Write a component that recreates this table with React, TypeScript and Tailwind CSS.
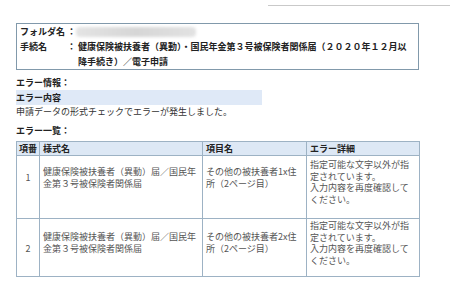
import React from "react";

const font = { fontFamily: '"Noto Sans CJK JP", "Noto Sans", sans-serif' };

type Row = {
  no: string;
  form: string[];
  item: string[];
  detail: string[];
  pad: { no: string; form: string; detail: string };
  h: string;
};

const rows: Row[] = [
  {
    no: "1",
    form: ["健康保険被扶養者（異動）届／国民年", "金第３号被保険者関係届"],
    item: ["その他の被扶養者1x住", "所（2ページ目）"],
    detail: ["指定可能な文字以外が指", "定されています。", "入力内容を再度確認して", "ください。"],
    pad: { no: "pt-[16px]", form: "pt-[10px]", detail: "pt-[3px]" },
    h: "h-[63px]",
  },
  {
    no: "2",
    form: ["健康保険被扶養者（異動）届／国民年", "金第３号被保険者関係届"],
    item: ["その他の被扶養者2x住", "所（2ページ目）"],
    detail: ["指定可能な文字以外が指", "定されています。", "入力内容を再度確認して", "ください。"],
    pad: { no: "pt-[24px]", form: "pt-[12px]", detail: "pt-[1px]" },
    h: "h-[58px]",
  },
];

const Lines: React.FC<{ lines: string[] }> = ({ lines }) => (
  <>
    {lines.map((l, i) => (
      <div key={i} className="whitespace-nowrap">
        {l}
      </div>
    ))}
  </>
);

export default function App() {
  return (
    <div className="w-[450px] h-[296px] bg-white overflow-hidden text-[9px]" style={font}>
      <div className="pt-[5px]">
        <div className="ml-[268px] h-px bg-[#c9c9c9]" />
      </div>

      <div className="pl-[16px]">
        {/* folder / procedure box */}
        <div className="mt-[17px] w-[403px] border border-[#8199ab] pl-[3px] font-bold text-[#222] leading-[15px]">
          <div className="grid grid-cols-[47px_9px_1fr]">
            <div>フォルダ名</div>
            <div>：</div>
            <div className="pt-[3px]">
              <div className="h-[10px] w-[120px] rounded-sm bg-gradient-to-r from-[#e4e4e4] via-[#d6d6d6] to-[#e2e2e2] blur-[1.5px]" />
            </div>
            <div>手続名</div>
            <div>：</div>
            <div className="pl-[2px] whitespace-nowrap">
              健康保険被扶養者（異動）・国民年金第３号被保険者関係届（２０２０年１２月以
            </div>
            <div />
            <div />
            <div className="pl-[2px] whitespace-nowrap">降手続き）／電子申請</div>
          </div>
        </div>

        <div className="mt-[5px] font-bold text-[#222] leading-[15px]">エラー情報：</div>
        <div className="w-[246px] h-[15px] bg-[#dfe9f7] font-bold text-[#222] leading-[15px]">
          エラー内容
        </div>
        <div className="text-[#333] leading-[14px]">申請データの形式チェックでエラーが発生しました。</div>

        <div className="mt-[5px] font-bold text-[#222] leading-[14px]">エラー一覧：</div>

        <table className="mt-[3px] table-fixed border-collapse w-[403px] leading-[11.5px]">
          <colgroup>
            <col className="w-[23px]" />
            <col className="w-[163px]" />
            <col className="w-[104px]" />
            <col className="w-[113px]" />
          </colgroup>
          <thead>
            <tr className="h-[14px] bg-[#dde8f5] text-[#222]">
              <th className="border border-[#9db2c4] px-0 py-0 text-center font-bold">項番</th>
              <th className="border border-[#9db2c4] px-[3px] py-0 text-left font-bold">様式名</th>
              <th className="border border-[#9db2c4] px-[3px] py-0 text-left font-bold">項目名</th>
              <th className="border border-[#9db2c4] px-[3px] py-0 text-left font-bold">エラー詳細</th>
            </tr>
          </thead>
          <tbody className="text-[#555]">
            {rows.map((r) => (
              <tr key={r.no} className={r.h}>
                <td className={`border border-[#9db2c4] align-top text-center ${r.pad.no}`}>{r.no}</td>
                <td className={`border border-[#9db2c4] align-top px-[3px] ${r.pad.form}`}>
                  <Lines lines={r.form} />
                </td>
                <td className={`border border-[#9db2c4] align-top px-[3px] ${r.pad.form}`}>
                  <Lines lines={r.item} />
                </td>
                <td className={`border border-[#9db2c4] align-top px-[3px] ${r.pad.detail}`}>
                  <Lines lines={r.detail} />
                </td>
              </tr>
            ))}
          </tbody>
        </table>
      </div>
    </div>
  );
}
